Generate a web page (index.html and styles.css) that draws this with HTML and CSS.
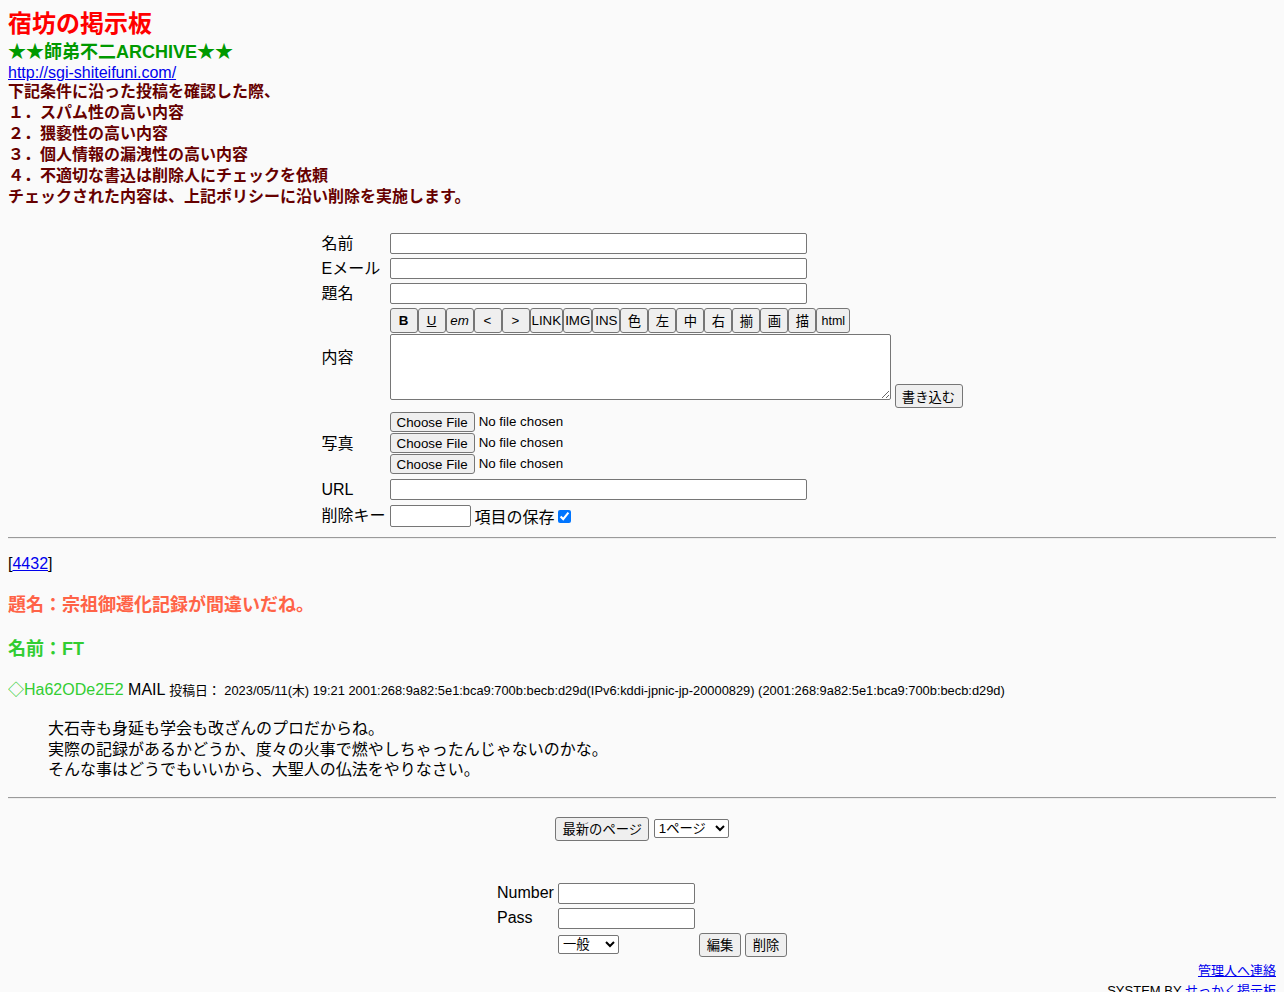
FILE: index.html
```html
<!DOCTYPE html>
<html lang="ja">
<head>
<meta charset="utf-8">
<title>宿坊の掲示板</title>
<link rel="stylesheet" href="styles.css">
</head>
<body>
<header class="head">
  <h1 class="title">宿坊の掲示板</h1>
  <div class="sub">★★師弟不二ARCHIVE★★</div>
  <a class="home" href="#">http://sgi-shiteifuni.com/</a>
  <div class="policy">
    <div>下記条件に沿った投稿を確認した際、</div>
    <div>１．スパム性の高い内容</div>
    <div>２．猥褻性の高い内容</div>
    <div>３．個人情報の漏洩性の高い内容</div>
    <div>４．不適切な書込は削除人にチェックを依頼</div>
    <div>チェックされた内容は、上記ポリシーに沿い削除を実施します。</div>
  </div>
</header>

<form class="post-form">
  <div class="label">名前</div>
  <div class="field"><input class="txt wide" type="text"></div>
  <div class="label">Eメール</div>
  <div class="field"><input class="txt wide" type="text"></div>
  <div class="label">題名</div>
  <div class="field"><input class="txt wide" type="text"></div>
  <div class="label">内容</div>
  <div class="field editor">
    <div class="toolbar">
      <button type="button" class="tb b">B</button><button type="button" class="tb u">U</button><button type="button" class="tb i">em</button><button type="button" class="tb">&lt;</button><button type="button" class="tb">&gt;</button><button type="button" class="tb">LINK</button><button type="button" class="tb">IMG</button><button type="button" class="tb">INS</button><button type="button" class="tb">色</button><button type="button" class="tb">左</button><button type="button" class="tb">中</button><button type="button" class="tb">右</button><button type="button" class="tb">揃</button><button type="button" class="tb">画</button><button type="button" class="tb">描</button><button type="button" class="tb html">html</button>
    </div>
    <div class="body-row">
      <textarea class="area"></textarea>
      <button type="button" class="btn submit">書き込む</button>
    </div>
  </div>
  <div class="label">写真</div>
  <div class="field files">
    <div class="file"><button type="button" class="btn choose">Choose File</button><span>No file chosen</span></div>
    <div class="file"><button type="button" class="btn choose">Choose File</button><span>No file chosen</span></div>
    <div class="file"><button type="button" class="btn choose">Choose File</button><span>No file chosen</span></div>
  </div>
  <div class="label">URL</div>
  <div class="field"><input class="txt wide" type="text"></div>
  <div class="label">削除キー</div>
  <div class="field keep">
    <input class="txt key" type="password"><span>項目の保存</span><input class="chk" type="checkbox" checked>
  </div>
</form>

<hr class="rule top-rule">

<article class="post">
  <p class="num">[<a href="#">4432</a>]</p>
  <h3 class="subject">題名：宗祖御遷化記録が間違いだね。</h3>
  <h3 class="name">名前：FT</h3>
  <p class="meta"><span class="trip">◇Ha62ODe2E2</span> <span class="mail">MAIL</span> <span class="small">投稿日： 2023/05/11(木) 19:21 2001:268:9a82:5e1:bca9:700b:becb:d29d(IPv6:kddi-jpnic-jp-20000829) (2001:268:9a82:5e1:bca9:700b:becb:d29d)</span></p>
  <blockquote class="text">
    大石寺も身延も学会も改ざんのプロだからね。<br>
    実際の記録があるかどうか、度々の火事で燃やしちゃったんじゃないのかな。<br>
    そんな事はどうでもいいから、大聖人の仏法をやりなさい。
  </blockquote>
</article>

<hr class="rule bottom-rule">

<div class="pager">
  <button type="button" class="btn latest">最新のページ</button>
  <select class="sel page-sel"><option>1ページ</option></select>
</div>

<form class="edit-form">
  <div class="elabel">Number</div>
  <div><input class="txt num-in" type="text"></div>
  <div></div>
  <div class="elabel">Pass</div>
  <div><input class="txt num-in" type="password"></div>
  <div></div>
  <div></div>
  <div><select class="sel kind"><option>一般</option></select></div>
  <div class="ebtns"><button type="button" class="btn eb">編集</button><button type="button" class="btn eb">削除</button></div>
</form>

<footer class="foot">
  <div><a href="#">管理人へ連絡</a></div>
  <div>SYSTEM BY <a href="#">せっかく掲示板</a></div>
</footer>
</body>
</html>
```

FILE: styles.css
```css
html { background: #fafafa; }
body {
  margin: 8px;
  font-family: "Liberation Sans", Arial, "Noto Sans CJK JP", sans-serif;
  font-size: 16px;
  color: #000;
  background: #fafafa;
}
a { color: #0000ee; }

.title {
  margin: 0;
  font-size: 24px;
  line-height: 32px;
  color: #ff0000;
  font-weight: bold;
}
.sub {
  font-size: 18px;
  font-weight: bold;
  color: #009900;
  line-height: 25px;
}
.home { display: block; line-height: 16px; }
.policy { color: #660000; font-weight: bold; line-height: 21px; }

.post-form {
  display: grid;
  grid-template-columns: 64px 573px;
  column-gap: 4px;
  row-gap: 4px;
  width: max-content;
  margin: 26px auto 0;
  align-items: center;
}
.label { line-height: 20px; }
.field { display: flex; align-items: center; }
.txt {
  box-sizing: border-box;
  height: 21px;
  border: 1px solid #767676;
  border-radius: 2px;
  background: #fff;
  padding: 1px 2px;
  font: 13.33px "Liberation Sans", Arial, sans-serif;
  margin: 0;
}
.wide { width: 417px; }
.editor { flex-direction: column; align-items: flex-start; gap: 1px; }
.toolbar { display: flex; }
.tb {
  box-sizing: border-box;
  min-width: 28px;
  height: 25px;
  padding: 0 1px;
  margin: 0;
  font: 13.33px "Liberation Sans", Arial, "Noto Sans CJK JP", sans-serif;
  background: #efefef;
  border: 1px solid #767676;
  border-radius: 3px;
  color: #000;
}
.tb.b { font-weight: bold; }
.tb.u { text-decoration: underline; }
.tb.i { font-style: italic; }
.tb.html { width: 34px; font-size: 12.5px; }
.body-row { display: flex; align-items: flex-end; gap: 4px; }
.area {
  box-sizing: border-box;
  width: 501px;
  height: 66px;
  border: 1px solid #767676;
  border-radius: 2px;
  background: #fff;
  margin: 0 0 8px;
  resize: both;
}
.btn {
  box-sizing: border-box;
  font: 13.33px "Liberation Sans", Arial, "Noto Sans CJK JP", sans-serif;
  background: #efefef;
  border: 1px solid #767676;
  border-radius: 3px;
  color: #000;
  padding: 1px 6px;
  margin: 0;
}
.submit { height: 24px; width: 68px; }
.files { flex-direction: column; align-items: flex-start; }
.file { display: flex; align-items: flex-start; font-size: 13.33px; height: 21px; line-height: 20px; }
.choose { height: 20px; padding: 0 6px; margin-right: 4px; }
.keep { gap: 4px; }
.key { width: 81px; height: 22px; }
.chk { margin: 0 0 0 -1px; width: 13px; height: 13px; accent-color: #0075ff; }

.rule {
  margin: 9px 0 8px;
  border: 0;
  border-top: 1px solid #9a9a9a;
  border-bottom: 1px solid #eeeeee;
}
.bottom-rule { margin-top: 16px; }

.num { margin: 15px 0 0; line-height: 19px; }
.subject {
  margin: 20px 0 0;
  font-size: 18px;
  line-height: 24px;
  color: #ff6347;
}
.name {
  margin: 20px 0 0;
  font-size: 18px;
  line-height: 24px;
  color: #32cd32;
}
.meta { margin: 19px 0 0; line-height: 20px; }
.trip { color: #32cd32; }
.small { font-size: 12.87px; }
.text {
  margin: 18px 40px 0;
  line-height: 20.5px;
}

.pager {
  text-align: center;
  margin-top: 18px;
}
.latest { height: 24px; width: 94px; padding: 1px 4px; }
.sel {
  font: 13.33px "Liberation Sans", Arial, "Noto Sans CJK JP", sans-serif;
  border: 1px solid #767676;
  border-radius: 2px;
  background: #fff;
  height: 19px;
  padding: 0;
  margin: 0;
  vertical-align: 1px;
}
.page-sel { width: 75px; }

.edit-form {
  display: grid;
  grid-template-columns: 57px 137px 88px;
  column-gap: 4px;
  row-gap: 4px;
  width: max-content;
  margin: 42px auto 0;
  align-items: center;
}
.elabel { line-height: 20px; }
.num-in { width: 137px; }
.kind { width: 61px; }
.ebtns { display: flex; gap: 4px; }
.eb { height: 24px; width: 42px; padding: 1px 4px; }

.foot {
  text-align: right;
  font-size: 13px;
  line-height: 20px;
  margin-top: 4px;
}
```
